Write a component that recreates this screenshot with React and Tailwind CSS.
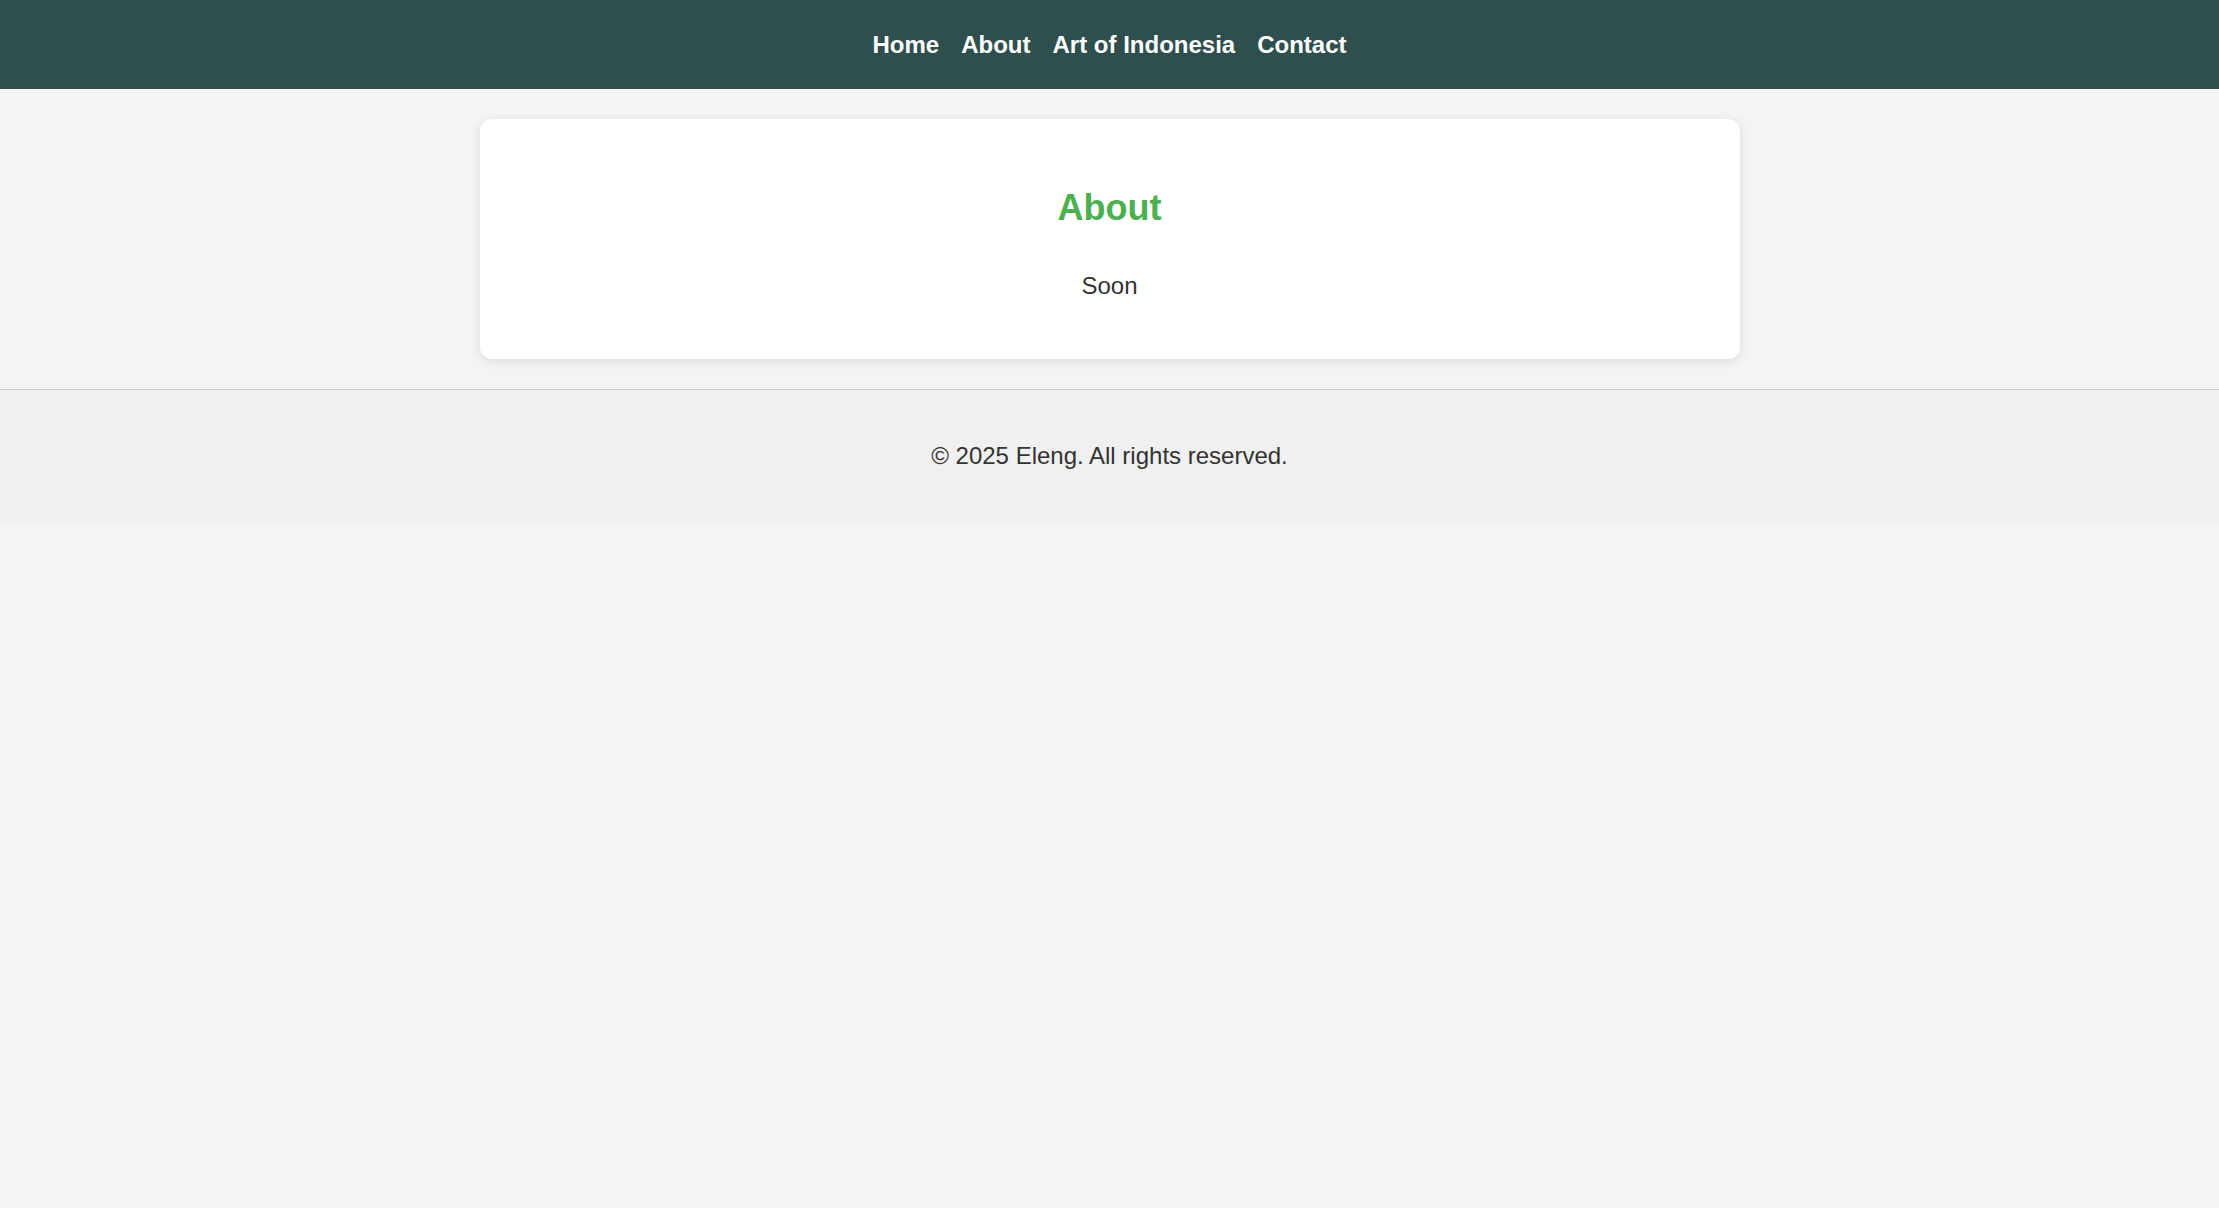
const links = ["Home", "About", "Art of Indonesia", "Contact"];

export default function App() {
  return (
    <div className="min-h-screen bg-[#f4f4f4] text-[#333] font-['Liberation_Sans',Arial,sans-serif]">
      <nav className="h-[89px] bg-[#2f4f4f] flex items-center justify-center gap-[22px]">
        {links.map((l) => (
          <a key={l} href="#" className="text-white font-bold text-[24px] leading-[27px]">
            {l}
          </a>
        ))}
      </nav>

      <main className="pt-[30px] pb-[30px] flex justify-center">
        <div className="w-[1260px] bg-white rounded-[12px] shadow-[0_2px_12px_rgba(0,0,0,0.1)] pt-[68px] pb-[59px] text-center">
          <h2 className="text-[36px] leading-[41px] font-bold text-[#4caf50] mb-[44px]">About</h2>
          <p className="text-[24px] leading-[28px] text-[#333]">Soon</p>
        </div>
      </main>

      <footer className="h-[133px] border-t border-[#ccc] bg-[#f0f0f0] flex items-center justify-center pb-[2px]">
        <p className="text-[24px] leading-[27px] text-[#333]">© 2025 Eleng. All rights reserved.</p>
      </footer>
    </div>
  );
}
